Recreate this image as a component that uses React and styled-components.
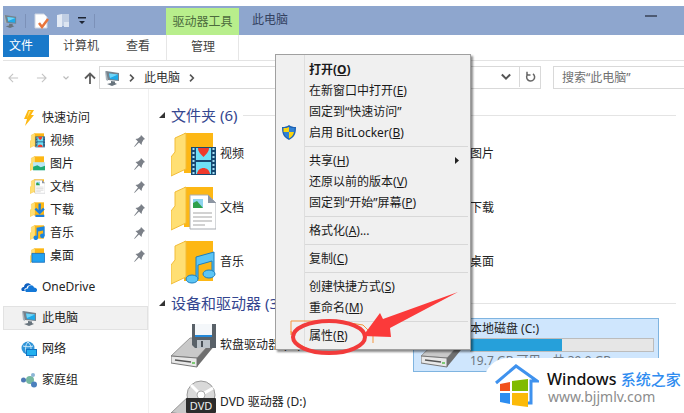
/**
 *
 * App
 *
 * Explorer window on "This PC" with the drive context menu opened
 */

import React from 'react';
import styled, { createGlobalStyle } from 'styled-components';

const GlobalStyle = createGlobalStyle`
  * {
    box-sizing: border-box;
  }

  body {
    margin: 0;
    background: #fff;
    color: #222;
    font-family: 'Noto Sans', 'Noto Sans CJK SC', sans-serif;
    font-size: 12px;
    line-height: 20px;
  }

  button, input {
    margin: 0;
    padding: 0;
    border: 0;
    background: none;
    color: inherit;
    font: inherit;
  }

  svg {
    display: block;
    flex: none;
  }
`;

const Shell = styled.div`
  position: relative;
  display: flex;
  flex-direction: column;
  height: 100vh;
  padding: 6px 0 0 3px;
  overflow: hidden;
  white-space: nowrap;
`;

const TitleBar = styled.header`
  display: flex;
  flex: none;
  height: 29px;
  background: #8ea6ce;
`;

const QuickTools = styled.div`
  display: flex;
  align-items: center;
  gap: 8px;
  width: 163px;
`;

const Divider = styled.span`
  width: 1px;
  height: 14px;
  background: #7c91b8;
`;

const IconButton = styled.button`
  display: flex;
  align-items: center;
  justify-content: center;
  height: 20px;
`;

const ToolsLabel = styled.div`
  width: 73px;
  margin-top: 2px;
  background: #b8ee8c;
  color: #4c6b3d;
  line-height: 27px;
  text-align: center;
`;

const WindowTitle = styled.h1`
  flex: 1;
  margin: 0;
  padding-left: 13px;
  color: #33415f;
  font-size: 12px;
  font-weight: 400;
  line-height: 28px;
`;

const Minimize = styled(IconButton)`
  width: 12px;
  margin-right: 27px;
`;

const Ribbon = styled.div`
  display: flex;
  flex: none;
  height: 26px;
  border-bottom: 1px solid #e3e3e3;
`;

const RibbonTabs = styled.div`
  display: flex;
  width: 163px;
`;

const Tab = styled.button`
  height: 22px;
  padding: 0 13px 0 14px;
  color: #444;
`;

const FileTab = styled(Tab)`
  width: 46px;
  padding: 0 6px;
  background: #1979ca;
  color: #fff;
  text-align: left;
`;

const ManageTab = styled(Tab)`
  width: 73px;
  height: 25px;
  padding-bottom: 2px;
  border: solid #e6e6e6;
  border-width: 0 1px;
`;

const AddressRow = styled.div`
  display: flex;
  flex: none;
  gap: 12px;
  padding-top: 5px;
  height: 28px;
`;

const Arrows = styled.div`
  display: flex;
  flex: none;
  align-items: center;
  gap: 15px;
  width: 96px;
  padding-left: 4px;
`;

const AddressBox = styled.div`
  display: flex;
  flex: 1;
  align-items: center;
  gap: 8px;
  padding-left: 4px;
  border: 1px solid #d9d9d9;
  color: #333;
`;

const AddressEnd = styled.div`
  display: flex;
  gap: 8px;
  height: 21px;
  margin-left: auto;
`;

const Refresh = styled(IconButton)`
  width: 21px;
  border-left: 1px solid #d9d9d9;
`;

const Search = styled.input`
  width: 131px;
  padding-left: 8px;
  border: solid #d9d9d9;
  border-width: 1px 0 1px 1px;

  &::placeholder {
    color: #707070;
    opacity: 1;
  }
`;

const AddressMain = styled.div`
  display: flex;
  flex: 1;
`;

const Content = styled.div`
  display: flex;
  flex: 1;
  min-height: 0;
`;

const Sidebar = styled.nav`
  flex: none;
  width: 146px;
  padding-top: 17px;
  border-right: 1px solid #f0f0f0;
`;

const Places = styled.div`
  display: flex;
  flex-direction: column;
  gap: 7px;
  padding-top: 8px;
`;

const Place = styled.a`
  display: flex;
  align-items: center;
  gap: 5px;
  height: ${props => (props.$place ? 24 : 23)}px;
  padding: 0 3px 0 ${props => (props.$nested ? 27 : 18)}px;
  background: ${props => (props.$active ? '#f1f1f1' : 'none')};
  box-shadow: ${props => (props.$active ? 'inset 0 0 0 1px #e2e2e2' : 'none')};
  color: #222;
  text-decoration: none;

  .pin {
    margin-left: auto;
  }
`;

const Main = styled.main`
  flex: 1;
  min-width: 0;
  padding: 14px 0 0 14px;
  overflow: hidden;
`;

const GroupTitle = styled.h2`
  display: flex;
  align-items: center;
  gap: 6px;
  height: 24px;
  margin: 0;
  padding-right: 8px;
  color: #34468f;
  font-size: 15px;
  font-weight: 400;

  svg {
    margin-left: -4px;
  }

  &::after {
    content: '';
    flex: 1;
    height: 1px;
    background: #e4e4e4;
  }
`;

const Tiles = styled.div`
  display: grid;
  grid-template-columns: 246px 246px;
  grid-auto-rows: 54px;
  gap: ${props => props.$gap}px 4px;
  padding-top: ${props => props.$gap}px;
  padding-bottom: 2px;
`;

const Tile = styled.div`
  display: flex;
  align-items: center;
  gap: 4px;
  padding: 0 4px 0 7px;
  border: 1px solid ${props => (props.$selected ? '#7fb4e0' : 'transparent')};
  background: ${props => (props.$selected ? '#cfe6fd' : 'none')};
`;

const DriveInfo = styled.div`
  flex: 1;
  line-height: 18px;
`;

const Usage = styled.div`
  height: 14px;
  border: 1px solid #bcbcbc;
  background: #e6e6e6;
`;

const UsageFill = styled.div`
  height: 100%;
  background: #26a0da;
`;

const FreeSpace = styled.div`
  color: #6d7780;
`;

const Menu = styled.div`
  position: absolute;
  top: 54px;
  left: 275px;
  width: 196px;
  padding: 4px 2px 3px 0;
  border: 1px solid #a0a0a0;
  background: linear-gradient(to right, #f0f0f0 28px, #dedede 28px, #dedede 29px, #f0f0f0 29px);
  box-shadow: 2px 2px 2px rgba(0, 0, 0, 0.45);
`;

const MenuItem = styled.button`
  display: flex;
  align-items: center;
  width: 100%;
  height: 21px;
  padding-right: 9px;
  color: #1a1a1a;
  font-weight: ${props => (props.$strong ? 700 : 400)};

  .arrow {
    margin-left: auto;
  }
`;

const MenuIcon = styled.span`
  width: 33px;
  padding-left: 6px;
`;

const MenuLine = styled.div`
  height: 1px;
  margin: 3px 0 3px 29px;
  background: #d8d8d8;
`;

const Marker = styled.svg`
  position: absolute;
  top: 285px;
  left: 285px;
  pointer-events: none;
`;

const SiteBadge = styled.aside`
  position: absolute;
  right: 0;
  bottom: 0;
  display: flex;
  gap: 8px;
  width: 200px;
  height: 55px;
  padding: 5px 0 0 11px;
  border-radius: 24px 0 0 0;
  background: #fff;
`;

const SiteName = styled.div`
  padding-top: 6px;
  color: #111;
  font-size: 16px;
  font-weight: 500;

  span {
    color: #2f8cf0;
    font-size: 15px;
  }
`;

const SiteUrl = styled.div`
  padding-left: 1px;
  color: #8c8c8c;
  font-size: 14px;
  line-height: 16px;
`;

/* icons */

const PcIcon = ({ size = 16 }) => (
  <svg width={size} height={size} viewBox="0 0 16 16">
    <path d="M1 1l3 1v9l-2-1z" fill="#a9b4bc" />
    <path d="M2 1l13 2v8l-11-1z" fill="#75828c" />
    <path d="M5 3.500l9 1v5.500L6 9z" fill="#1fa9e8" />
    <path d="M5 3.500l9 1L6 8z" fill="#6fd5f8" />
    <path d="M7 11l4 .5v1.500l2 1-5 2-5-2 4-1z" fill="#68747d" />
  </svg>
);

const CheckPage = () => (
  <svg width="15" height="16" viewBox="0 0 15 16">
    <path d="M1 1h9l3 3v11H1z" fill="#fff" stroke="#cdd5e2" />
    <path d="M5 10l3 4 6-8" fill="none" stroke="#e8743b" strokeWidth="2.500" />
  </svg>
);

const NewFolder = () => (
  <svg width="13" height="15" viewBox="0 0 13 15">
    <path d="M0 2l5-1v13H0z" fill="#e4ebf5" />
    <path d="M5 1h7v12H5z" fill="#c0cee3" />
    <path d="M7 9h5v5H7z" fill="#dce5f1" />
  </svg>
);

const Caret = () => (
  <svg width="8" height="8" viewBox="0 0 8 8">
    <path d="M0 0h8v1.500H0zM1 4h6L4 7z" fill="#1d2533" />
  </svg>
);

const ArrowIcon = ({ color, flip }) => (
  <svg width="13" height="10" viewBox="0 0 13 12" fill="none" stroke={color} strokeWidth="1.300">
    <path d={flip ? 'M1 6h11M7 1l5 5-5 5' : 'M12 6H1M6 1L1 6l5 5'} />
  </svg>
);

const UpIcon = () => (
  <svg width="12" height="12" viewBox="0 0 12 12" fill="none" stroke="#5d5d5d" strokeWidth="1.800">
    <path d="M6 12V1.500M1 6.500l5-5 5 5" />
  </svg>
);

const Chevron = ({ down, color = '#555', size = 6 }) => (
  <svg width={size} height={size} viewBox="0 0 6 6" fill="none" stroke={color} strokeWidth="1.200">
    <path d={down ? 'M.5 1.500L3 4l2.500-2.500' : 'M1.500.5L4 3 1.500 5.500'} />
  </svg>
);

const RefreshIcon = () => (
  <svg width="11" height="12" viewBox="0 0 11 12" fill="none" stroke="#666" strokeWidth="1.500">
    <path d="M8 2.800A4 4 0 1 1 3 3M2 .8v3.200h3.500" />
  </svg>
);

const Bolt = () => (
  <svg width="16" height="16" viewBox="0 0 16 16">
    <path d="M7 0h6l-3 5h3L4 16l2-7H3z" fill="#fdb813" />
    <path d="M8 1h2L6 8z" fill="#ffe27c" />
  </svg>
);

const Pin = () => (
  <svg className="pin" width="11" height="12" viewBox="0 0 11 12">
    <path d="M7 0l4 4-1.500.7L8 7.500 7.500 10 5 7.500 1 11.500 0 12l.5-1L4 6.500 1.500 4 4 3.500 6.500 1.500z" fill="#7b8088" />
  </svg>
);

const Cloud = () => (
  <svg width="16" height="16" viewBox="0 0 16 16">
    <path d="M1 12c-2-3 1-4 2-4 0-4 5-5 7-2-3 0-4 1-4.500 3C3 9 3 11 4 12z" fill="#0d5fc0" />
    <path d="M5 13c-2-2 0-4 2-3.500C7 6 12 5 13 8.500c3 0 4 3 2 4.500z" fill="#1478d7" />
  </svg>
);

const Network = () => (
  <svg width="16" height="17" viewBox="0 0 16 17">
    <circle cx="7" cy="7" r="6.500" fill="#2f94d8" />
    <path d="M2 5c3 1 7 1 10 0M7 1C4 4 4 9 6 13M7 1c3 3 3 5 3 7" fill="none" stroke="#cdeafa" />
    <path d="M5 8h11v7H5z" fill="#0f73c4" />
    <path d="M6 9h9v5H6z" fill="#22b0ef" />
    <path d="M8 16h5" stroke="#0f73c4" />
  </svg>
);

const HomeGroup = () => (
  <svg width="16" height="16" viewBox="0 0 16 16">
    <circle cx="2.500" cy="8" r="2.500" fill="#4d79b5" />
    <circle cx="9" cy="8" r="4" fill="#76b8a0" />
    <circle cx="12" cy="3" r="2" fill="#8bb5d6" />
    <circle cx="13" cy="12.500" r="3" fill="#4b80bd" />
  </svg>
);

const VideoMark = () => (
  <g>
    <path d="M20 15h25v28H20z" fill="#174a73" />
    <path d="M25 16h15v12H25zM25 30h15v12H25z" fill="#6fe0f7" />
    <path d="M27 16h11c0 4-3 6-5.500 9C30 22 27 20 27 16zM26 42c1-8 12-8 13 0z" fill="#f03a2c" />
    <path d="M22.500 16v27M42.500 16v27" stroke="#a8dff5" strokeWidth="2" strokeDasharray="2 2" />
  </g>
);

const DocMark = () => (
  <g>
    <path d="M19 9h18l8 8v26H19z" fill="#fff" stroke="#a9adb3" />
    <path d="M37 9v8h8z" fill="#8d96a3" />
    <path d="M22 13h10v9H22z" fill="#8ed4ee" />
    <path d="M22 22v-5l4-2 6 7z" fill="#2fa04b" />
    <path d="M22 27h19M22 31h19M22 35h19M22 39h12" stroke="#a5a5a5" />
  </g>
);

const MusicMark = () => (
  <g fill="#5cc5f5" stroke="#1b7fc0">
    <path d="M25 17l18-5v23h-2V21l-14 4v14h-2z" />
    <ellipse cx="21" cy="39" rx="6" ry="4" />
    <ellipse cx="38" cy="34" rx="6" ry="4" />
  </g>
);

const SmallMusicMark = () => (
  <g fill="#1c84dd">
    <path d="M23 13l21-4v25h-4V20l-13 3v16h-4z" />
    <circle cx="21" cy="39" r="6" />
    <circle cx="38" cy="34" r="6" />
  </g>
);

const PictureMark = () => (
  <g>
    <path d="M14 22h31v21H14z" fill="#b9e8f7" />
    <path d="M14 43V34l11-4 9 5 11-4v12z" fill="#1fab74" />
  </g>
);

const DownloadMark = () => (
  <path d="M31 10v22M20 23l11 11 11-11M20 42h23" fill="none" stroke="#1c7fdb" strokeWidth="6" />
);

const DesktopMark = () => (
  <path d="M11 20h33v23H11z" fill="#21a2f0" stroke="#1267b8" strokeWidth="2" />
);

const marks = {
  video: VideoMark,
  picture: PictureMark,
  doc: DocMark,
  download: DownloadMark,
  music: MusicMark,
  desktop: DesktopMark,
};

const Folder = ({ type, size = 45 }) => {
  const small = size < 20;
  const Mark = small && type === 'music' ? SmallMusicMark : marks[type];
  return (
    <svg width={size} height={size} viewBox="0 0 45 45">
      <path d="M13 1h29v40H13z" fill="#fdb714" />
      <path d="M0 44V25l4-5V6l11-5v36z" fill="#ffdf73" stroke="#f2bc38" />
      {/* the mark takes more of the folder at list size */}
      <g transform={small ? 'translate(-7 -7) scale(1.16)' : undefined}>
        <Mark />
      </g>
    </svg>
  );
};

const DriveBox = () => (
  <g>
    <path d="M0 33l19-18h25L26 35z" fill="#c9c9c9" stroke="#999" />
    <path d="M0 33l26 2v9L0 40z" fill="#e8e8e8" stroke="#777" />
    <path d="M26 35l18-20v7L26 44z" fill="#6f6f6f" />
    <path d="M4 37l16 2" stroke="#555" strokeWidth="1.500" />
    <path d="M21 40h3" stroke="#58c04d" strokeWidth="1.500" />
  </g>
);

const Floppy = () => (
  <svg width="45" height="45" viewBox="0 0 45 45">
    <DriveBox />
    <path d="M21 1h24v24H24l-3-3z" fill="#596168" />
    <path d="M24 1h17v13H24z" fill="#f4f7fa" />
    <path d="M24 12h17v2H24z" fill="#2488d8" />
    <path d="M26 17h13v8H26z" fill="#bcc3c9" />
    <path d="M30 18h2v6h-2z" fill="#4a5157" />
  </svg>
);

const Dvd = () => (
  <svg width="45" height="45" viewBox="0 0 45 45">
    <DriveBox />
    <circle cx="30" cy="15" r="14" fill="#d9d9d9" stroke="#999" />
    <path d="M30 15L20 5M30 15l12-7" stroke="#fff" strokeWidth="3" />
    <circle cx="30" cy="15" r="4" fill="#fff" stroke="#aaa" />
    <rect x="15" y="18" width="30" height="15" rx="1" fill="#2c2c2c" />
    <text x="30" y="30" textAnchor="middle" fill="#eee" fontSize="11">DVD</text>
  </svg>
);

const Disk = () => (
  <svg width="45" height="45" viewBox="0 0 45 45">
    <DriveBox />
  </svg>
);

const Shield = () => (
  <svg width="14" height="15" viewBox="0 0 14 15">
    <path d="M7 0c2 1.500 4 2 7 2 0 6-1 10-7 13C1 12 0 8 0 2c3 0 5-.5 7-2z" fill="#1e63b5" />
    <path d="M7 2v5H1.500V3C4 3 5 3 7 2zM7 7h5c-.5 3-2 5-5 6.500z" fill="#fbd50f" />
    <path d="M7 2c2 1 3 1 5.500 1v4H7zM7 7v6.500C4 12 2 10 1.800 7z" fill="#3182d4" />
  </svg>
);

const Collapse = () => (
  <svg width="6" height="6" viewBox="0 0 6 6">
    <path d="M6 0v6H0z" fill="#333" />
  </svg>
);

const SiteLogo = () => (
  <svg width="44" height="45" viewBox="0 0 44 45">
    <path d="M1 20L21 3l21 15h-6v22H29" fill="none" stroke="#3f92ee" strokeWidth="3" />
    <path d="M5 21l10-2v9H5z" fill="#f1511b" />
    <path d="M17 18l16-2v12H17z" fill="#80bb01" />
    <path d="M5 30h10v11l-10-2z" fill="#2d8df0" />
    <path d="M17 30h16v14l-16-2z" fill="#fbba09" />
  </svg>
);

const libraries = [
  { name: '视频', type: 'video' },
  { name: '图片', type: 'picture' },
  { name: '文档', type: 'doc' },
  { name: '下载', type: 'download' },
  { name: '音乐', type: 'music' },
  { name: '桌面', type: 'desktop' },
];

const menuGroups = [
  [
    { text: '打开', hotkey: 'O', strong: true },
    { text: '在新窗口中打开', hotkey: 'E' },
    { text: '固定到“快速访问”' },
    { text: '启用 BitLocker', hotkey: 'B', shield: true },
  ],
  [
    { text: '共享', hotkey: 'H', submenu: true },
    { text: '还原以前的版本', hotkey: 'V' },
    { text: '固定到“开始”屏幕', hotkey: 'P' },
  ],
  [{ text: '格式化', hotkey: 'A', tail: '...' }],
  [{ text: '复制', hotkey: 'C' }],
  [
    { text: '创建快捷方式', hotkey: 'S' },
    { text: '重命名', hotkey: 'M' },
  ],
  [{ text: '属性', hotkey: 'R' }],
];

const ContextMenu = () => (
  <Menu role="menu">
    {menuGroups.map((group, index) => (
      <React.Fragment key={group[0].text}>
        {index > 0 && <MenuLine />}
        {group.map(item => (
          <MenuItem key={item.text} role="menuitem" $strong={item.strong}>
            <MenuIcon>{item.shield && <Shield />}</MenuIcon>
            <span>
              {item.text}
              {item.hotkey && <>(<u>{item.hotkey}</u>)</>}
              {item.tail}
            </span>
            {item.submenu && (
              <svg className="arrow" width="4" height="7" viewBox="0 0 4 7">
                <path d="M0 0l4 3.500L0 7z" fill="#222" />
              </svg>
            )}
          </MenuItem>
        ))}
      </React.Fragment>
    ))}
  </Menu>
);

class App extends React.Component {
  render() {
    const used = 50;

    return (
      <Shell>
        <GlobalStyle />
        <TitleBar>
          <QuickTools>
            <PcIcon size={14} />
            <Divider />
            <IconButton aria-label="属性"><CheckPage /></IconButton>
            <IconButton aria-label="新建文件夹"><NewFolder /></IconButton>
            <IconButton aria-label="自定义"><Caret /></IconButton>
            <Divider />
          </QuickTools>
          <ToolsLabel>驱动器工具</ToolsLabel>
          <WindowTitle>此电脑</WindowTitle>
          <Minimize aria-label="最小化">
            <svg width="12" height="2" viewBox="0 0 12 2"><path d="M0 0h12v2H0z" fill="#4d5a73" /></svg>
          </Minimize>
        </TitleBar>

        <Ribbon>
          <RibbonTabs>
            <FileTab>文件</FileTab>
            <Tab>计算机</Tab>
            <Tab>查看</Tab>
          </RibbonTabs>
          <ManageTab>管理</ManageTab>
        </Ribbon>

        <AddressRow>
          <AddressMain>
            <Arrows>
              <IconButton aria-label="后退"><ArrowIcon color="#c4c4c4" /></IconButton>
              <IconButton aria-label="前进"><ArrowIcon color="#c4c4c4" flip /></IconButton>
              <IconButton aria-label="历史"><Chevron down color="#bbb" /></IconButton>
              <IconButton aria-label="上移"><UpIcon /></IconButton>
            </Arrows>
            <AddressBox>
              <PcIcon />
              <Chevron size={8} />
              <span>此电脑</span>
              <Chevron size={8} />
              <AddressEnd>
                <IconButton aria-label="展开"><Chevron down size={10} /></IconButton>
                <Refresh aria-label="刷新"><RefreshIcon /></Refresh>
              </AddressEnd>
            </AddressBox>
          </AddressMain>
          <Search type="text" aria-label="搜索" placeholder="搜索“此电脑”" />
        </AddressRow>

        <Content>
          <Sidebar>
            <Place href="#quick"><Bolt />快速访问</Place>
            {libraries.map(place => (
              <Place key={place.type} href={`#${place.type}`} $nested>
                <Folder type={place.type} size={15} />
                {place.name}
                <Pin />
              </Place>
            ))}
            <Places>
              <Place href="#onedrive" $place><Cloud />OneDrive</Place>
              <Place href="#pc" $place $active><PcIcon />此电脑</Place>
              <Place href="#network" $place><Network />网络</Place>
              <Place href="#homegroup" $place><HomeGroup />家庭组</Place>
            </Places>
          </Sidebar>

          <Main>
            <section>
              <GroupTitle><Collapse />文件夹 (6)</GroupTitle>
              <Tiles $gap={0}>
                {libraries.map(folder => (
                  <Tile key={folder.type}>
                    <Folder type={folder.type} />
                    {folder.name}
                  </Tile>
                ))}
              </Tiles>
            </section>
            <section>
              <GroupTitle><Collapse />设备和驱动器 (3)</GroupTitle>
              <Tiles $gap={3}>
                <Tile><Floppy />软盘驱动器 (A:)</Tile>
                <Tile $selected>
                  <Disk />
                  <DriveInfo>
                    <div>本地磁盘 (C:)</div>
                    <Usage>
                      <UsageFill style={{ width: `${used}%` }} />
                    </Usage>
                    <FreeSpace>19.7 GB 可用，共 39.9 GB</FreeSpace>
                  </DriveInfo>
                </Tile>
                <Tile><Dvd />DVD 驱动器 (D:)</Tile>
              </Tiles>
            </section>
          </Main>
        </Content>

        <ContextMenu />

        {/* red ring and arrow on the last menu entry */}
        <Marker width="176" height="74" viewBox="0 0 176 74">
          <path d="M6 50V36h46l26 4 10 10v8M6 46c2 12 16 20 36 23" fill="none" stroke="#f5953c" />
          <ellipse cx="44" cy="52" rx="36" ry="16" fill="none" stroke="#f23b3b" strokeWidth="4" />
          <path d="M78 51l17-23 3 6L173 7l-68 36 1 9z" fill="#fb3a3a" />
        </Marker>

        <SiteBadge>
          <SiteLogo />
          <div>
            <SiteName>Windows <span>系统之家</span></SiteName>
            <SiteUrl>www.bjjmlv.com</SiteUrl>
          </div>
        </SiteBadge>
      </Shell>
    );
  }
}

export default App;
